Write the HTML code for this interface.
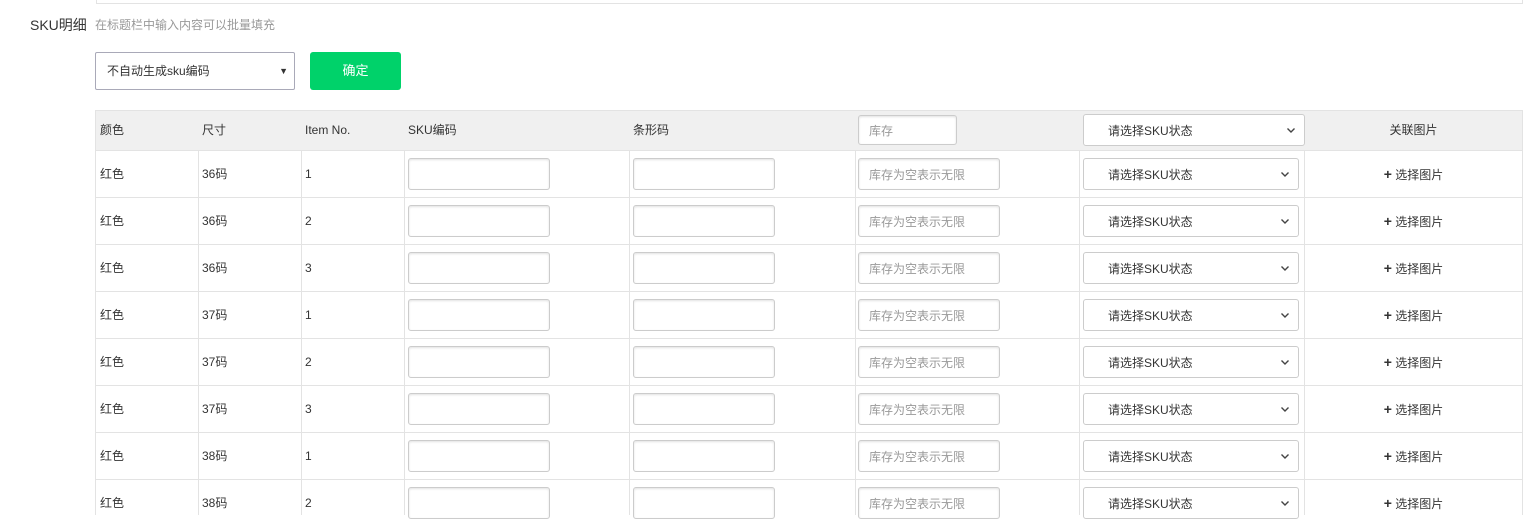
<!DOCTYPE html>
<html><head><meta charset="utf-8">
<style>
*{box-sizing:border-box;margin:0;padding:0}
body{width:1538px;height:515px;overflow:hidden;background:#fff;font-family:"Liberation Sans","Noto Sans CJK SC",sans-serif;color:#333;position:relative}
.a{position:absolute}
.topbox{left:96px;top:-10px;width:1427px;height:14px;border:1px solid #e3e3e3}
.t{font-size:12px;white-space:nowrap;line-height:16px;height:16px}
.t span{vertical-align:top;font-size:12px}
.inp{position:absolute;border:1px solid #ccc;border-radius:3px;box-shadow:inset 0 1px 2px rgba(0,0,0,.12);background:#fff;font-size:12px;color:#999;padding-left:10px;display:flex;align-items:center}
.sel{position:absolute;border:1px solid #ccc;border-radius:3px;background:#fff;font-size:12px;color:#333;padding-left:24px;display:flex;align-items:center}
.chev{position:absolute;right:8px;top:50%;margin-top:-4px;width:10px;height:8px}
.hl{position:absolute;height:1px;background:#e3e3e3;left:95px;width:1428px}
.vl{position:absolute;width:1px;background:#e3e3e3}
</style></head><body>
<div class="a topbox"></div>
<div class="a" style="left:30px;top:15px;font-size:14px;color:#333">SKU明细</div>
<div class="a t" style="left:95px;top:17px;color:#999">在标题栏中输入内容可以批量填充</div>
<div class="a" style="left:95px;top:52px;width:200px;height:38px;border:1px solid #a9a9b8;border-radius:2px;font-size:12px;color:#333;padding-left:11px;line-height:36px">不自动生成sku编码<span style="position:absolute;right:6px;top:0;font-size:9px">▼</span></div>
<div class="a" style="left:310px;top:52px;width:91px;height:38px;background:#00d26a;border-radius:3px;color:#fff;font-size:13px;text-align:center;line-height:38px">确定</div>

<div class="a" style="left:95px;top:110px;width:1428px;height:40px;background:#f0f0f0"></div>
<div class="hl" style="top:110px"></div>
<div class="a t" style="left:100px;top:122px">颜色</div>
<div class="a t" style="left:202px;top:122px">尺寸</div>
<div class="a t" style="left:305px;top:122px">Item No.</div>
<div class="a t" style="left:408px;top:122px">SKU编码</div>
<div class="a t" style="left:633px;top:122px">条形码</div>
<div class="inp" style="left:858px;top:115px;width:99px;height:30px">库存</div>
<div class="sel" style="left:1083px;top:114px;width:222px;height:32px">请选择SKU状态<svg class="chev" viewBox="0 0 10 8"><path d="M1.5 2.5L5 6l3.5-3.5" fill="none" stroke="#444" stroke-width="1.4"/></svg></div>
<div class="a t" style="left:1304px;top:122px;width:219px;text-align:center">关联图片</div>

<div class="vl" style="left:95px;top:110px;height:405px"></div>
<div class="vl" style="left:198px;top:150px;height:365px"></div>
<div class="vl" style="left:301px;top:150px;height:365px"></div>
<div class="vl" style="left:404px;top:150px;height:365px"></div>
<div class="vl" style="left:629px;top:150px;height:365px"></div>
<div class="vl" style="left:855px;top:150px;height:365px"></div>
<div class="vl" style="left:1079px;top:150px;height:365px"></div>
<div class="vl" style="left:1304px;top:150px;height:365px"></div>
<div class="vl" style="left:1522px;top:110px;height:405px"></div>

<div id="rows"></div>
<script>
var d=[["36码","1"],["36码","2"],["36码","3"],["37码","1"],["37码","2"],["37码","3"],["38码","1"],["38码","2"]];
var h="";
for(var i=0;i<d.length;i++){var y=150+47*i;
h+='<div class="hl" style="top:'+y+'px"></div>';
h+='<div class="a t" style="left:100px;top:'+(y+16)+'px">红色</div>';
h+='<div class="a t" style="left:202px;top:'+(y+16)+'px">'+d[i][0]+'</div>';
h+='<div class="a t" style="left:305px;top:'+(y+16)+'px">'+d[i][1]+'</div>';
h+='<div class="inp" style="left:408px;top:'+(y+8)+'px;width:142px;height:32px"></div>';
h+='<div class="inp" style="left:633px;top:'+(y+8)+'px;width:142px;height:32px"></div>';
h+='<div class="inp" style="left:858px;top:'+(y+8)+'px;width:142px;height:32px">库存为空表示无限</div>';
h+='<div class="sel" style="left:1083px;top:'+(y+8)+'px;width:216px;height:32px">请选择SKU状态<svg class="chev" viewBox="0 0 10 8"><path d="M1.5 2.5L5 6l3.5-3.5" fill="none" stroke="#444" stroke-width="1.4"/></svg></div>';
h+='<div class="a t" style="left:1304px;top:'+(y+16)+'px;width:219px;text-align:center"><b style="font-size:14px;color:#333">+</b> 选择图片</div>';
}
document.getElementById("rows").innerHTML=h;
</script>
</body></html>
